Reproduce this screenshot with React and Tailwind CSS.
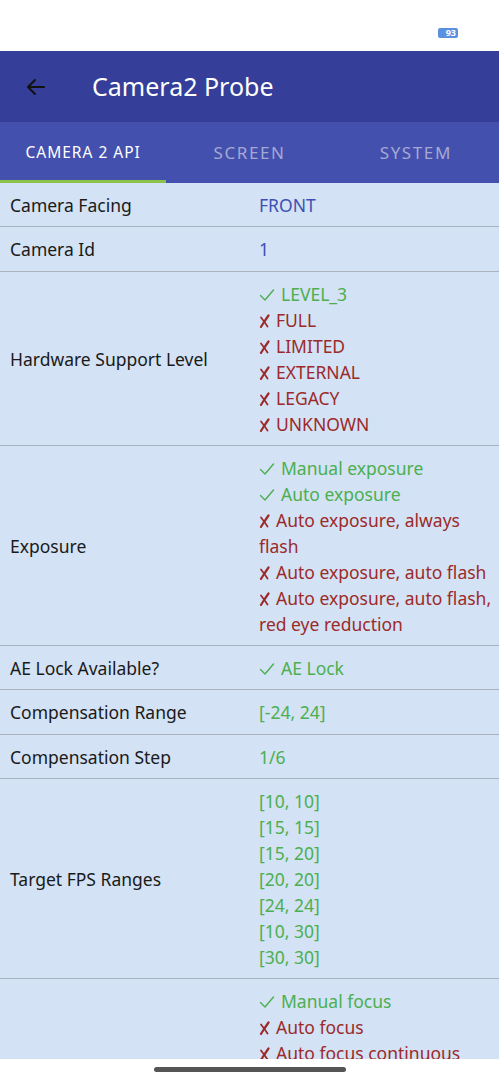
const rows = [
  { label: 'Camera Facing', values: [{ t: 'FRONT', c: 'blue' }] },
  { label: 'Camera Id', values: [{ t: '1', c: 'blue' }] },
  {
    label: 'Hardware Support Level',
    values: [
      { t: 'LEVEL_3', c: 'ok' },
      { t: 'FULL', c: 'no' },
      { t: 'LIMITED', c: 'no' },
      { t: 'EXTERNAL', c: 'no' },
      { t: 'LEGACY', c: 'no' },
      { t: 'UNKNOWN', c: 'no' },
    ],
  },
  {
    label: 'Exposure',
    values: [
      { t: 'Manual exposure', c: 'ok' },
      { t: 'Auto exposure', c: 'ok' },
      { t: 'Auto exposure, always flash', c: 'no' },
      { t: 'Auto exposure, auto flash', c: 'no' },
      { t: 'Auto exposure, auto flash, red eye reduction', c: 'no' },
    ],
  },
  { label: 'AE Lock Available?', values: [{ t: 'AE Lock', c: 'ok' }] },
  { label: 'Compensation Range', values: [{ t: '[-24, 24]', c: 'plain' }] },
  { label: 'Compensation Step', values: [{ t: '1/6', c: 'plain' }] },
  {
    label: 'Target FPS Ranges',
    values: ['[10, 10]', '[15, 15]', '[15, 20]', '[20, 20]', '[24, 24]', '[10, 30]', '[30, 30]'].map(t => ({ t, c: 'plain' })),
  },
  {
    label: 'Focus Modes',
    values: [
      { t: 'Manual focus', c: 'ok' },
      { t: 'Auto focus', c: 'no' },
      { t: 'Auto focus continuous video', c: 'no' },
      { t: 'Auto focus continuous picture', c: 'no' },
      { t: 'Macro', c: 'no' },
      { t: 'EDOF', c: 'no' },
    ],
  },
]

function Check() {
  return (
    <svg width="16" height="14" viewBox="0 0 16 14" fill="none" className="inline align-[-1px] mr-[6px]">
      <path d="M1.5 7.5l4.5 4.5 8.5-10" stroke="#4caf50" strokeWidth="1.4" strokeLinecap="round" strokeLinejoin="round" />
    </svg>
  )
}

function Cross() {
  return (
    <svg width="11" height="14" viewBox="0 0 11 14" fill="none" className="inline align-[-1px] mr-[6px]">
      <path d="M9.5 1.5C7 5 4.5 9 2 12.8" stroke="#9c2a2a" strokeWidth="2.2" strokeLinecap="round" />
      <path d="M2 3.5C4.5 6.5 6.5 9.5 8.5 12.5" stroke="#9c2a2a" strokeWidth="1.8" strokeLinecap="round" />
    </svg>
  )
}

function Value({ v }) {
  if (v.c === 'blue') return <div className="text-[#3f51b5]">{v.t}</div>
  if (v.c === 'plain') return <div className="text-[#4caf50]">{v.t}</div>
  if (v.c === 'ok')
    return (
      <div className="text-[#4caf50]">
        <Check />
        {v.t}
      </div>
    )
  return (
    <div className="text-[#9c2a2a]">
      <Cross />
      {v.t}
    </div>
  )
}

export default function App() {
  return (
    <div className="w-[499px] h-[1080px] flex flex-col overflow-hidden bg-white font-['Noto_Sans',Roboto,sans-serif]">
      {/* status bar */}
      <div className="h-[51px] shrink-0 flex items-start justify-end pt-[28px] pr-[41px]">
        <div className="h-[10px] w-[20px] rounded-[2px] bg-[#5b8fe0] text-white text-[9px] leading-[10px] font-bold flex items-center justify-end pr-[2px]">
          93
        </div>
      </div>

      {/* app bar */}
      <div className="h-[71px] shrink-0 bg-[#353e98] flex items-center">
        <svg width="24" height="24" viewBox="0 0 24 24" className="ml-[24px]" fill="none">
          <path d="M20 12H4M11 5l-7 7 7 7" stroke="#111" strokeWidth="2" strokeLinecap="round" strokeLinejoin="round" />
        </svg>
        <div className="ml-[44px] text-white text-[25px] font-normal">Camera2 Probe</div>
      </div>

      {/* tabs */}
      <div className="h-[61px] shrink-0 bg-[#4450ad] grid grid-cols-3">
        {['CAMERA 2 API', 'SCREEN', 'SYSTEM'].map((t, i) => (
          <div key={t} className="relative flex items-center justify-center">
            <span className={i === 0 ? 'text-white text-[15.5px] tracking-[1px]' : 'text-[#a4a9d4] text-[17px] tracking-[1.6px]'}>{t}</span>
            {i === 0 && <div className="absolute left-0 right-0 bottom-0 h-[3px] bg-[#8bc34a]" />}
          </div>
        ))}
      </div>

      {/* table */}
      <div className="flex-1 overflow-hidden bg-[#d3e2f4] text-[17.5px] leading-[26px]">
        {rows.map(r => (
          <div key={r.label} className="flex items-center border-b border-[#a9b1bc] pt-[9px] pb-[8.3px]">
            <div className="w-[259px] shrink-0 pl-[10px] text-[#1a1a1a]">{r.label}</div>
            <div className="flex-1 pr-[4px]">
              {r.values.map((v, i) => (
                <Value key={i} v={v} />
              ))}
            </div>
          </div>
        ))}
      </div>

      {/* home indicator */}
      <div className="h-[21px] shrink-0 bg-white flex items-center justify-center">
        <div className="w-[192px] h-[5px] rounded-full bg-[#555]" />
      </div>
    </div>
  )
}
